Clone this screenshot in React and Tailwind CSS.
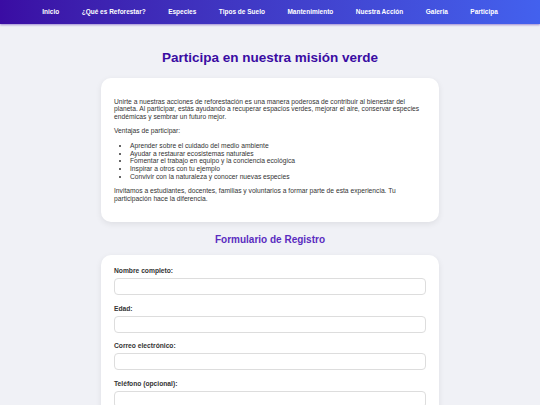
import { useState } from "react";

const LINKS = ["Inicio", "¿Qué es Reforestar?", "Especies", "Tipos de Suelo", "Mantenimiento", "Nuestra Acción", "Galeria", "Participa"];

const VENTAJAS = [
  "Aprender sobre el cuidado del medio ambiente",
  "Ayudar a restaurar ecosistemas naturales",
  "Fomentar el trabajo en equipo y la conciencia ecológica",
  "Inspirar a otros con tu ejemplo",
  "Convivir con la naturaleza y conocer nuevas especies",
];

const FIELDS = [
  { name: "nombre", label: "Nombre completo:", type: "text" },
  { name: "edad", label: "Edad:", type: "number" },
  { name: "correo", label: "Correo electrónico:", type: "email" },
  { name: "telefono", label: "Teléfono (opcional):", type: "tel" },
];

export default function App() {
  const [form, setForm] = useState({ nombre: "", edad: "", correo: "", telefono: "" });

  const handleChange = (e) => {
    setForm({ ...form, [e.target.name]: e.target.value });
  };

  return (
    <div className="min-h-screen bg-[#f0f1f6] text-[#333] font-['Liberation_Sans',Arial,sans-serif]">
      <nav className="h-[24px] bg-gradient-to-r from-[#3a0ca3] to-[#4361ee] shadow-[0_1px_2px_rgba(58,12,163,0.45)]">
        <ul className="h-full flex items-center justify-center gap-[22.5px]">
          {LINKS.map((l) => (
            <li key={l} className="text-[6.5px] leading-[8px]">
              <a href="#" className="block text-white font-bold">{l}</a>
            </li>
          ))}
        </ul>
      </nav>

      <main className="px-[101px]">
        <h2 className="pt-[26px] text-center text-[13.5px] font-bold text-[#3a0ca3] leading-[15px]">
          Participa en nuestra misión verde
        </h2>

        <section className="mt-[13px] bg-white rounded-[10px] px-[13px] py-[13px] shadow-[0_2px_6px_rgba(0,0,0,0.08)] text-[6.7px] leading-[7.7px] text-[#333]">
          <p className="my-[6.7px]">
            Unirte a nuestras acciones de reforestación es una manera poderosa de contribuir al bienestar del planeta. Al participar, estás ayudando a recuperar espacios verdes, mejorar el aire, conservar especies endémicas y sembrar un futuro mejor.
          </p>
          <p className="my-[6.7px]">Ventajas de participar:</p>
          <ul className="my-[6.7px] list-disc pl-[16px]">
            {VENTAJAS.map((v) => (
              <li key={v}>{v}</li>
            ))}
          </ul>
          <p className="my-[6.7px]">
            Invitamos a estudiantes, docentes, familias y voluntarios a formar parte de esta experiencia. Tu participación hace la diferencia.
          </p>
        </section>

        <h3 className="mt-[12px] text-center text-[10px] leading-[11.5px] font-bold text-[#5a2cc0]">
          Formulario de Registro
        </h3>

        <form className="mt-[9px] bg-white rounded-[10px] px-[13px] pt-[12.5px] pb-[13px] shadow-[0_2px_6px_rgba(0,0,0,0.08)]">
          {FIELDS.map((f) => (
            <div key={f.name} className="mb-[9.3px]">
              <label className="block text-[6.7px] leading-[7.7px] font-bold text-[#333] mb-[3.5px]">{f.label}</label>
              <input
                name={f.name}
                type={f.type}
                value={form[f.name]}
                onChange={handleChange}
                className="block w-full h-[17px] rounded-[4px] border border-[#ddd] bg-white px-[5px] text-[6.7px] outline-none"
              />
            </div>
          ))}
        </form>
      </main>
    </div>
  );
}
